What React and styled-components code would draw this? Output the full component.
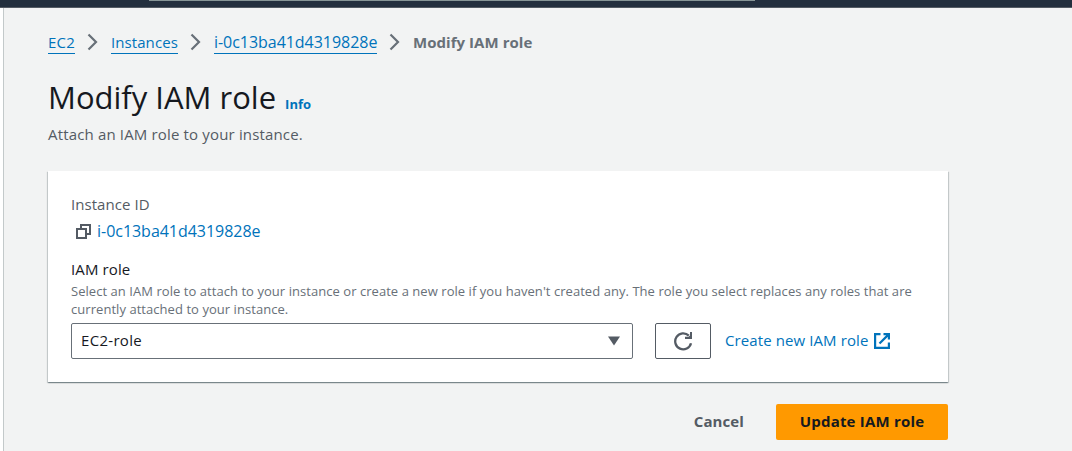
import React from "react";
import styled, { createGlobalStyle } from "styled-components";

const Global = createGlobalStyle`
  * { box-sizing: border-box; }
  body { margin: 0; background: #f2f3f3; color: #16191f; overflow: hidden;
    font-family: "Open Sans", "Noto Sans", sans-serif; }
`;
const Page = styled.div`height: 451px; display: flex; flex-direction: column;`;
const TopBar = styled.header`
  height: 8px; flex: none; background: #232f3e; border-bottom: 1px solid #545b64;
`;
const SearchEdge = styled.div`
  margin-left: 149px; width: 606px; height: 1px; background: #879596;
`;
const Body = styled.div`flex: 1; display: flex;`;
const SideRail = styled.div`width: 4px; background: #fff; border-right: 1px solid #c3c9ca;`;
const Main = styled.main`width: 944px; padding: 22px 0 0 44px;`;
const Text = styled.span`
  display: block; margin: 0; white-space: nowrap; flex: none;
  font-size: ${(p) => p.$size || 15}px;
  line-height: ${(p) => p.$line || 22}px;
  font-weight: ${(p) => p.$weight || 400};
  color: ${(p) => p.$color || "#16191f"};
  letter-spacing: ${(p) => p.$track || 0}px;
`;
const Crumbs = styled.nav`display: flex; align-items: center; height: 24px;`;
const CrumbLink = styled(Text)`
  height: 23px; border-bottom: 1px solid #0073bb; width: ${(p) => p.$width}px;
`;
const Chevron = styled.svg`width: 12px; height: 18px; margin: 0 12px; flex: none;`;
const TitleRow = styled.div`display: flex; align-items: baseline; gap: 9px; margin-top: 23px;`;
const Lead = styled(Text)`margin-top: 6px;`;
const Card = styled.section`
  margin-top: 26px; height: 211px; padding: 22px 23px 0; background: #fff;
  box-shadow: 0 1px 1px 0 rgba(0, 28, 36, 0.3), 1px 1px 1px 0 rgba(0, 28, 36, 0.15),
    -1px 1px 1px 0 rgba(0, 28, 36, 0.15);
`;
const IdRow = styled.div`display: flex; align-items: center; gap: 5px; margin: 5px 0 16px; padding-left: 4px;`;
const Help = styled.div`margin-top: 2px;`;
const Controls = styled.div`display: flex; align-items: center; margin-top: 5px;`;
const Select = styled.div`
  width: 562px; height: 36px; border: 1px solid #687078; border-radius: 2px;
  display: flex; align-items: center; justify-content: space-between; padding: 0 12px 0 9px;
`;
const IconButton = styled.button`
  width: 56px; height: 36px; margin: 0 14px 0 22px; padding: 0; background: #fff;
  border: 1px solid #545b64; border-radius: 2px;
  display: flex; align-items: center; justify-content: center;
`;
const Icon = styled.svg`display: block; flex: none; fill: none;`;
const Actions = styled.div`display: flex; justify-content: flex-end; align-items: center; gap: 32px; margin-top: 22px;`;
const Primary = styled.button`
  width: 172px; height: 36px; padding: 0; border: 0; border-radius: 2px; background: #ff9900;
  font-family: inherit; display: flex; align-items: center; justify-content: center;
`;
const CreateLink = styled.div`width: 165px; display: flex; align-items: center; justify-content: space-between;`;
const ControlText = styled(Text)`padding-bottom: 2px;`;

const Separator = () => (
  <Chevron viewBox="0 0 12 18" fill="none" stroke="#687078" strokeWidth="2.2">
    <path d="M1.5 1.5 9 9 1.5 16.5" />
  </Chevron>
);

export default function App() {
  return (
    <Page>
      <Global />
      <TopBar><SearchEdge /></TopBar>
      <Body>
        <SideRail />
        <Main>
          <Crumbs>
            <CrumbLink $color="#0073bb" $width={27} $track={0.2}>EC2</CrumbLink>
            <Separator />
            <CrumbLink $color="#0073bb" $width={67} $track={0.08}>Instances</CrumbLink>
            <Separator />
            <CrumbLink $color="#0073bb" $width={163} $size={16} $track={-0.04}>i-0c13ba41d4319828e</CrumbLink>
            <Separator />
            <Text $color="#687078" $weight={700} $track={0.05}>Modify IAM role</Text>
          </Crumbs>
          <TitleRow>
            <Text as="h1" $size={31} $line={40}>Modify IAM role</Text>
            <Text $size={13} $weight={700} $color="#0073bb">Info</Text>
          </TitleRow>
          <Lead $color="#545b64" $track={0.16}>Attach an IAM role to your instance.</Lead>
          <Card>
            <Text $color="#545b64" $track={0.06}>Instance ID</Text>
            <IdRow>
              <Icon width="17" height="17" viewBox="0 0 17 17" stroke="#545b64" strokeWidth="2">
                <path d="M2 6h9v9H2z" />
                <path d="M6 5V2h9v9h-3" />
              </Icon>
              <Text $color="#0073bb" $size={16} $track={-0.03}>i-0c13ba41d4319828e</Text>
            </IdRow>
            <Text $track={0.12}>IAM role</Text>
            <Help>
              <Text $size={13} $line={18} $color="#687078" $track={0.05}>Select an IAM role to attach to your instance or create a new role if you haven't created any. The role you select replaces any roles that are</Text>
              <Text $size={13} $line={18} $color="#687078" $track={0.05}>currently attached to your instance.</Text>
            </Help>
            <Controls>
              <Select>
                <ControlText $track={0.3}>EC2-role</ControlText>
                <Icon width="12" height="10" viewBox="0 0 12 10"><path d="M0 .5h12L6 9.5z" fill="#545b64" /></Icon>
              </Select>
              <IconButton aria-label="Refresh">
                <Icon width="20" height="20" viewBox="0 0 20 20">
                  <path d="M18 12.2A8 8 0 1 1 15.8 4.6" stroke="#545b64" strokeWidth="2.3" />
                  <path d="M19 1v7h-7V5.8h3.5L17 4.5V1z" fill="#545b64" />
                </Icon>
              </IconButton>
              <CreateLink>
                <ControlText $color="#0073bb" $track={0.1}>Create new IAM role</ControlText>
                <Icon width="16" height="16" viewBox="0 0 16 16" stroke="#0073bb" strokeWidth="2.2">
                  <path d="M6.5 1.1H1.1v13.8h13.8V9.5M9.5 1.1h5.4v5.4M14.9 1.1 5.5 10.5" />
                </Icon>
              </CreateLink>
            </Controls>
          </Card>
          <Actions>
            <ControlText $weight={700} $color="#545b64" $track={0.1}>Cancel</ControlText>
            <Primary><ControlText $weight={700} $track={0.2}>Update IAM role</ControlText></Primary>
          </Actions>
        </Main>
      </Body>
    </Page>
  );
}
